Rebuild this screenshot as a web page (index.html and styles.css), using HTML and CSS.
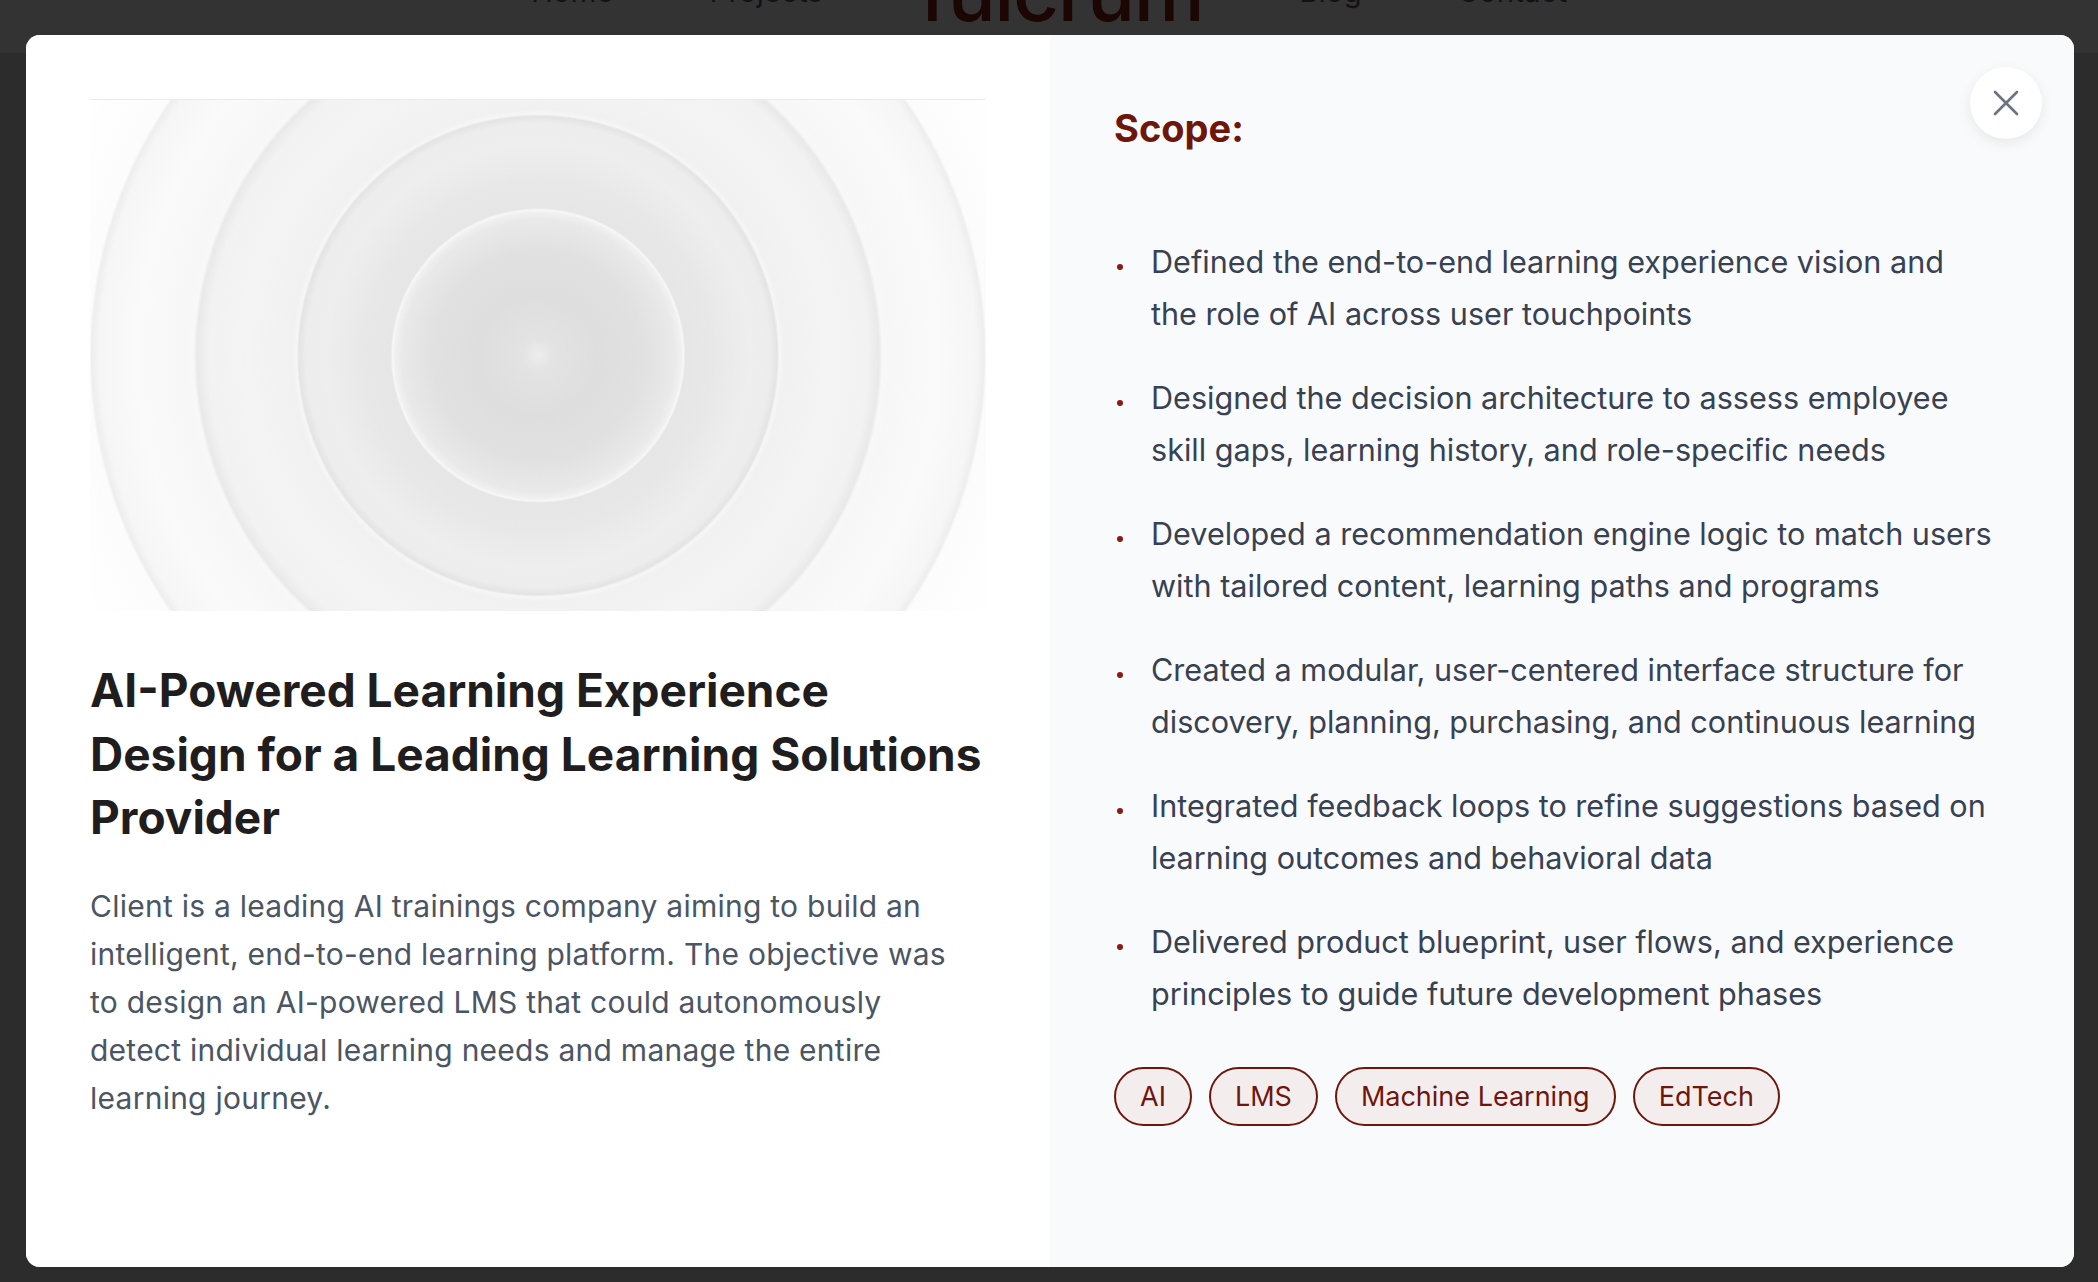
FILE: index.html
```html
<!DOCTYPE html>
<html lang="en">
<head>
<meta charset="utf-8">
<title>AI-Powered Learning Experience Design</title>
<link rel="stylesheet" href="styles.css">
</head>
<body>
<header class="topbar">
  <nav class="nav">
    <a class="nav-link" href="#">Home</a>
    <a class="nav-link" href="#">Projects</a>
    <span class="logo">fulcrum</span>
    <a class="nav-link" href="#">Blog</a>
    <a class="nav-link" href="#">Contact</a>
  </nav>
</header>

<div class="modal" role="dialog" aria-modal="true">
  <section class="modal-left">
    <div class="hero-img"></div>
    <h1 class="title">AI-Powered Learning Experience Design for a Leading Learning Solutions Provider</h1>
    <p class="desc">Client is a leading AI trainings company aiming to build an intelligent, end-to-end learning platform. The objective was to design an AI-powered LMS that could autonomously detect individual learning needs and manage the entire learning journey.</p>
  </section>
  <section class="modal-right">
    <h2 class="scope-title">Scope:</h2>
    <ul class="scope-list">
      <li>Defined the end-to-end learning experience vision and the role of AI across user touchpoints</li>
      <li>Designed the decision architecture to assess employee skill gaps, learning history, and role-specific needs</li>
      <li>Developed a recommendation engine logic to match users with tailored content, learning paths and programs</li>
      <li>Created a modular, user-centered interface structure for discovery, planning, purchasing, and continuous learning</li>
      <li>Integrated feedback loops to refine suggestions based on learning outcomes and behavioral data</li>
      <li>Delivered product blueprint, user flows, and experience principles to guide future development phases</li>
    </ul>
    <div class="tags">
      <span class="tag">AI</span>
      <span class="tag">LMS</span>
      <span class="tag">Machine Learning</span>
      <span class="tag">EdTech</span>
    </div>
  </section>
  <button class="close-btn" aria-label="Close">
    <svg width="28" height="28" viewBox="0 0 28 28" fill="none" stroke="#6b7280" stroke-width="2.6" stroke-linecap="round">
      <path d="M3 3 L25 25 M25 3 L3 25"/>
    </svg>
  </button>
</div>
</body>
</html>
```

FILE: styles.css
```css
* { box-sizing: border-box; }

html, body { margin: 0; padding: 0; }

body {
  position: relative;
  min-height: 1282px;
  background: #2c2c2c;
  font-family: Inter, "Noto Sans", "Liberation Sans", sans-serif;
  overflow: hidden;
}

.topbar {
  height: 53px;
  background: #333333;
  overflow: hidden;
}

.nav {
  height: 53px;
  display: flex;
  justify-content: center;
  align-items: flex-end;
  gap: 96px;
}

.nav-link {
  font-size: 29.5px;
  line-height: 124px;
  color: #121212;
  text-decoration: none;
}

.logo {
  font-size: 80px;
  line-height: 122px;
  font-weight: 500;
  letter-spacing: -1.5px;
  color: #1c0604;
}

.modal {
  position: absolute;
  top: 35px;
  left: 26px;
  width: 2048px;
  height: 1232px;
  border-radius: 14px;
  overflow: hidden;
  display: grid;
  grid-template-columns: 1024px 1024px;
  background: #ffffff;
}

.modal-left {
  background: #ffffff;
  padding: 64px;
}

.hero-img {
  height: 512px;
  border-top: 1px solid #ebebeb;
  background: radial-gradient(circle at 50% 50%,
    #ededed 0px, #e3e3e3 16px, #dedede 60px, #e1e1e1 105px, #e9e9e9 136px, #f0f0f0 143px, #f7f7f7 145.5px,
    #e6e6e6 147.5px, #e8e8e8 175px, #eeeeee 212px, #ededed 232px, #e4e4e4 239px, #f6f6f6 241.5px,
    #f1f1f1 246px, #f4f4f4 290px, #f2f2f2 330px, #e9e9e9 341px, #f8f8f8 344.5px,
    #f7f7f7 352px, #fafafa 400px, #f6f6f6 438px, #eeeeee 446px, #fcfcfc 449px, #ffffff 520px);
}

.title {
  margin: 48px 0 0;
  font-size: 46px;
  line-height: 63.5px;
  font-weight: 700;
  letter-spacing: 0;
  color: #1f1d1d;
}

.desc {
  margin: 32px 0 0;
  max-width: 880px;
  font-size: 30px;
  line-height: 48px;
  letter-spacing: 0.25px;
  color: #4b5563;
}

.modal-right {
  background: #f9fafb;
  padding: 64px 80px 64px 64px;
}

.scope-title {
  margin: 0;
  font-size: 38px;
  line-height: 58px;
  font-weight: 700;
  color: #6f160c;
}

.scope-list {
  list-style: none;
  margin: 79px 0 0;
  padding: 0;
  display: flex;
  flex-direction: column;
  gap: 32px;
}

.scope-list li {
  display: flex;
  gap: 28px;
  font-size: 30.6px;
  line-height: 52px;
  color: #374151;
}

.scope-list li::before {
  content: "";
  flex: none;
  width: 6px;
  height: 6px;
  margin-top: 28px;
  margin-left: 3px;
  border-radius: 50%;
  background: #8b1a10;
}

.tags {
  margin-top: 47px;
  display: flex;
  flex-wrap: wrap;
  gap: 17px;
}

.tag {
  display: inline-flex;
  align-items: center;
  height: 59px;
  padding: 0 24px;
  border: 2px solid #6f160c;
  border-radius: 999px;
  background: #f3eded;
  color: #6f160c;
  font-size: 27px;
}

.close-btn {
  position: absolute;
  top: 32px;
  right: 32px;
  width: 72px;
  height: 72px;
  border: 0;
  border-radius: 50%;
  background: #ffffff;
  box-shadow: 0 4px 14px rgba(0, 0, 0, 0.08);
  display: flex;
  align-items: center;
  justify-content: center;
  padding: 0;
  cursor: pointer;
}
```
